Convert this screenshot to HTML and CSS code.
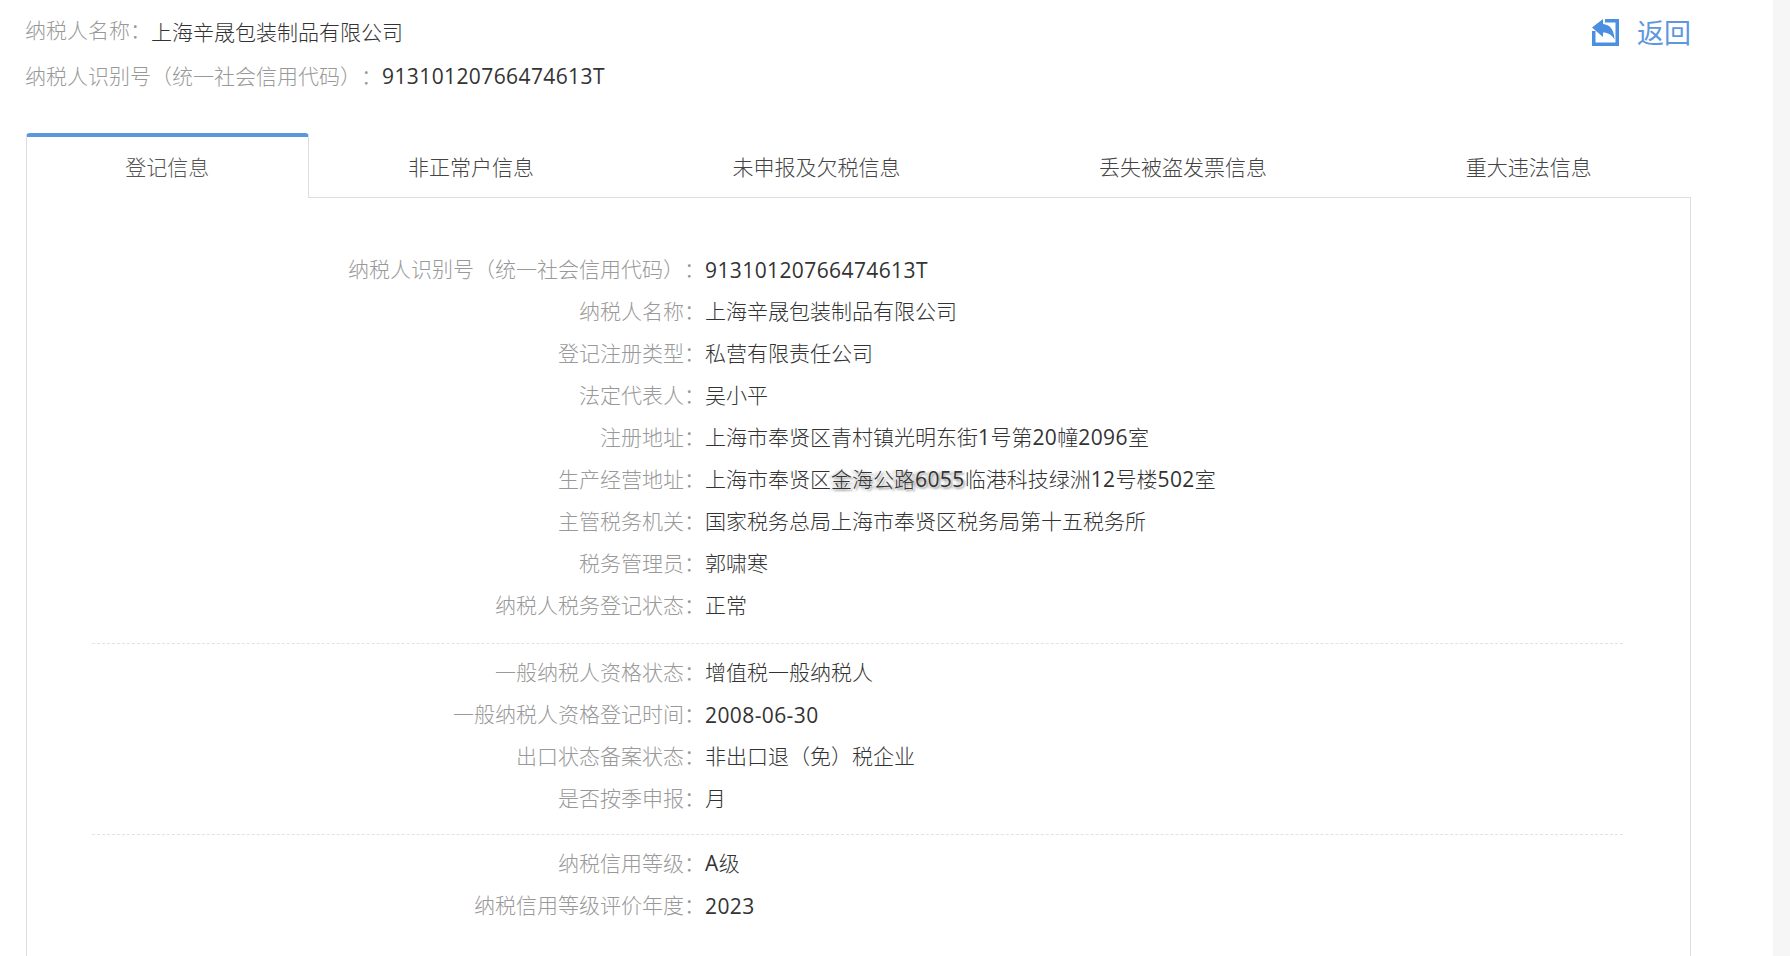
FILE: index.html
```html
<!DOCTYPE html>
<html lang="zh-CN">
<head>
<meta charset="utf-8">
<title>纳税人信息</title>
<link rel="stylesheet" href="styles.css">
</head>
<body>
<div class="page">
  <main class="main">
    <header class="head">
      <div class="who">
        <div class="who-line"><span class="lbl">纳税人名称：</span><span class="val">上海辛晟包装制品有限公司</span></div>
        <div class="who-line"><span class="lbl lbl-id">纳税人识别号（统一社会信用代码）：</span><span class="val num">91310120766474613T</span></div>
      </div>
      <a class="back">
        <svg class="back-icon" viewBox="0 0 27 27" aria-hidden="true">
          <path fill="#4a8fe0" d="M0 12h3.500v11.500h20V3.500H13V0h14v27H0z"/>
          <path fill="#4a8fe0" d="M0 8.500 11 0v5c6.500 .5 11 5 11.500 15.500C19.500 15.500 16 13.500 11 13.500V18z"/>
        </svg>
        <span class="back-text">返回</span>
      </a>
    </header>
    <nav class="tabs">
      <div class="tab active">登记信息</div>
      <div class="tab">非正常户信息</div>
      <div class="tab">未申报及欠税信息</div>
      <div class="tab">丢失被盗发票信息</div>
      <div class="tab">重大违法信息</div>
    </nav>
    <section class="panel">
      <div class="group">
        <div class="row"><span class="k">纳税人识别号（统一社会信用代码）：</span><span class="v num">91310120766474613T</span></div>
        <div class="row"><span class="k">纳税人名称：</span><span class="v">上海辛晟包装制品有限公司</span></div>
        <div class="row"><span class="k">登记注册类型：</span><span class="v">私营有限责任公司</span></div>
        <div class="row"><span class="k">法定代表人：</span><span class="v">吴小平</span></div>
        <div class="row"><span class="k">注册地址：</span><span class="v">上海市奉贤区青村镇光明东街<span class="num">1</span>号第<span class="num">20</span>幢<span class="num">2096</span>室</span></div>
        <div class="row"><span class="k">生产经营地址：</span><span class="v">上海市奉贤区<span class="smudge">金海公路<span class="num">6055</span></span>临港科技绿洲<span class="num">12</span>号楼<span class="num">502</span>室</span></div>
        <div class="row"><span class="k">主管税务机关：</span><span class="v">国家税务总局上海市奉贤区税务局第十五税务所</span></div>
        <div class="row"><span class="k">税务管理员：</span><span class="v">郭啸寒</span></div>
        <div class="row"><span class="k">纳税人税务登记状态：</span><span class="v">正常</span></div>
      </div>
      <div class="group">
        <div class="row"><span class="k">一般纳税人资格状态：</span><span class="v">增值税一般纳税人</span></div>
        <div class="row"><span class="k">一般纳税人资格登记时间：</span><span class="v num">2008-06-30</span></div>
        <div class="row"><span class="k">出口状态备案状态：</span><span class="v">非出口退（免）税企业</span></div>
        <div class="row"><span class="k">是否按季申报：</span><span class="v">月</span></div>
      </div>
      <div class="group">
        <div class="row"><span class="k">纳税信用等级：</span><span class="v"><span class="num">A</span>级</span></div>
        <div class="row"><span class="k">纳税信用等级评价年度：</span><span class="v num">2023</span></div>
      </div>
    </section>
  </main>
  <div class="rail"></div>
</div>
</body>
</html>
```
FILE: styles.css
```css
* { box-sizing: border-box; }
html, body { margin: 0; height: 100%; overflow: hidden; background: #fff; }
body {
  font-family: "Noto Sans CJK SC", "Liberation Sans", sans-serif;
  font-size: 21px;
  font-weight: 300;
  color: #333;
  text-spacing-trim: space-all;
}
.page { display: flex; height: 956px; }
.main { flex: 1; min-width: 0; padding: 0 82px 0 26px; overflow: hidden; }
.rail { width: 17px; background: #f6f6f6; }

.head { display: flex; justify-content: space-between; align-items: flex-start; height: 133px; }
.who { padding-top: 9px; margin-left: -1px; }
.who-line { display: flex; align-items: center; height: 43px; }
.who-line + .who-line { margin-top: 1px; }
.lbl { color: #999; position: relative; top: -2px; }
.lbl-id { top: 0; }
.val { color: #333; }
.num { font-family: "Open Sans", "Liberation Sans", sans-serif; font-weight: 400; letter-spacing: .4px; }
.val.num { padding-top: 2px; }

.back { display: flex; align-items: center; gap: 18px; color: #5f97dd; font-size: 27px; font-weight: 400; height: 27px; margin-top: 19px; }
.back-icon { width: 27px; height: 27px; display: block; }
.back-text { margin-top: -2px; }

.tabs { display: flex; height: 65px; }
.tab {
  flex: 1 1 auto;
  padding: 2px 98px 0;
  display: flex;
  align-items: center;
  justify-content: center;
  white-space: nowrap;
  color: #444;
  border-bottom: 1px solid #ddd;
}
.tab.active {
  color: #555;
  padding: 0 97px 4px;
  border-top: 4px solid #5b97dc;
  border-left: 1px solid #ddd;
  border-right: 1px solid #ddd;
  border-bottom: 0;
  border-radius: 4px 4px 0 0;
}

.panel {
  border: 1px solid #ddd;
  border-top: 0;
  border-radius: 0 0 3px 3px;
  height: 800px;
  padding: 49px 67px 0 65px;
}
.group { padding-bottom: 16px; margin-bottom: 6px; border-bottom: 1px dashed #e2e2e2; }
.group:first-child { padding-bottom: 18px; }
.group:last-child { border-bottom: 0; }
.row { display: flex; height: 42px; align-items: center; white-space: nowrap; }
.k { width: 613px; text-align: right; color: #999; flex: none; }
.v { color: #333; }
.v.num { padding-top: 4px; }
.smudge { text-shadow: 2px 2px 2px #aaa, -3px 1px 3px #bbb; }
```
